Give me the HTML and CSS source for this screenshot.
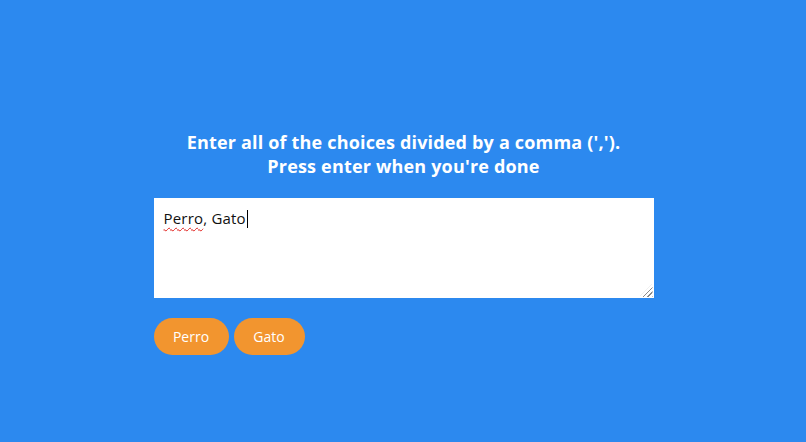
FILE: index.html
```html
<!DOCTYPE html>
<html>
<head>
<meta charset="utf-8">
<link rel="stylesheet" href="styles.css">
</head>
<body>
<main class="page">
  <h1 class="title">Enter all of the choices divided by a comma (',').<br>Press enter when you're done</h1>
  <div class="input-box">
    <div class="input-text"><span class="misspelled">Perro</span>, Gato<span class="caret"></span></div>
    <span class="grip"></span>
  </div>
  <div class="tags">
    <span class="tag tag-a">Perro</span>
    <span class="tag tag-b">Gato</span>
  </div>
</main>
</body>
</html>
```
FILE: styles.css
```css
html, body {
  margin: 0;
  padding: 0;
  height: 100%;
}
body {
  background: #2c89ef;
  font-family: "Open Sans", Lato, sans-serif;
  padding-left: 1px;
}
.page {
  width: 500px;
  margin: 0 auto;
  padding-top: 130px;
  display: flex;
  flex-direction: column;
}
.title {
  margin: 0;
  color: #fff;
  font-size: 18px;
  font-weight: 700;
  line-height: 24px;
  letter-spacing: 0.18px;
  text-align: center;
}
.input-box {
  position: relative;
  margin-top: 20px;
  height: 100px;
  background: #fff;
  box-sizing: border-box;
  padding: 10px 10px;
}
.input-text {
  font-size: 15px;
  letter-spacing: 0.2px;
  color: #111;
  line-height: 20px;
}
.misspelled {
  text-decoration: underline wavy #e0201c;
  text-decoration-thickness: 1px;
  text-underline-offset: 3px;
}
.caret {
  display: inline-block;
  width: 1px;
  height: 18px;
  background: #000;
  vertical-align: -4px;
  margin-left: 1px;
}
.grip {
  position: absolute;
  right: 1px;
  bottom: 1px;
  width: 13px;
  height: 13px;
  background: repeating-linear-gradient(135deg, transparent 0 2px, #8a8a8a 2px 3px);
  clip-path: polygon(100% 0, 100% 100%, 0 100%);
}
.tags {
  display: flex;
  gap: 5px;
  margin-top: 20px;
}
.tag {
  height: 37px;
  border-radius: 19px;
  background: #f2952f;
  color: #fff;
  font-size: 14px;
  display: flex;
  align-items: center;
  justify-content: center;
}
.tag-a { width: 75px; }
.tag-b { width: 71px; }
```
